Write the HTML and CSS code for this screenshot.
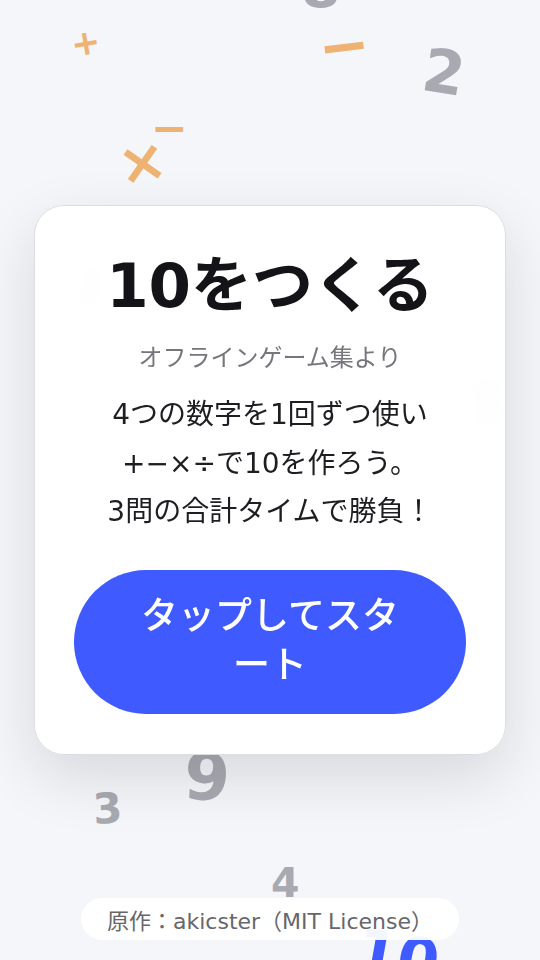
FILE: index.html
```html
<!DOCTYPE html>
<html lang="ja">
<head>
<meta charset="utf-8">
<title>10をつくる</title>
<link rel="stylesheet" href="styles.css">
</head>
<body>
<div class="bg" aria-hidden="true">
  <span class="f num f-top8">8</span>
  <span class="f op f-plus">+</span>
  <span class="f op f-minus1">−</span>
  <span class="f num f-two">2</span>
  <span class="f op f-minus2">−</span>
  <span class="f op f-times">×</span>
  <span class="f num f-hid1">2</span>
  <span class="f num f-hid2">5</span>
  <span class="f op f-hid3">÷</span>
  <span class="f num f-nine">9</span>
  <span class="f num f-three">3</span>
  <span class="f num f-four">4</span>
  <span class="f blue f-ten">10</span>
</div>

<main class="page">
  <section class="card">
    <h1 class="title">10をつくる</h1>
    <p class="subtitle">オフラインゲーム集より</p>
    <p class="desc">4つの数字を1回ずつ使い<br>+−×÷で10を作ろう。<br>3問の合計タイムで勝負！</p>
    <button class="start" type="button">タップしてスタート</button>
  </section>
</main>

<footer class="credit">原作：akicster（MIT License）</footer>
</body>
</html>
```

FILE: styles.css
```css
* { box-sizing: border-box; }

html, body {
  margin: 0;
  height: 100%;
}

body {
  background: #f4f6f9;
  font-family: "DejaVu Sans", "Noto Sans CJK JP", sans-serif;
  color: #1a1a1e;
  overflow: hidden;
  position: relative;
}

/* floating decorative symbols */
.bg {
  position: absolute;
  inset: 0;
  pointer-events: none;
}

.f {
  position: absolute;
  line-height: 1;
  font-weight: 700;
  white-space: nowrap;
}

.num { color: #a8aab1; }
.op { color: #eeb272; }
.blue { color: #3f5bff; }

.f-top8   { left: 301px; top: -40px; font-size: 57px; }
.f-plus   { left: 71px;  top: 26px;  font-size: 35px; transform: rotate(-10deg); }
.f-minus1 { left: 318px; top: 15px;  font-size: 62px; transform: rotate(-7deg); }
.f-two    { left: 423px; top: 42px;  font-size: 60px; transform: rotate(9deg); }
.f-minus2 { left: 151px; top: 106px; font-size: 44px; }
.f-times  { left: 118px; top: 133px; font-size: 58px; transform: rotate(-10deg); }
.f-hid1   { left: 72px;  top: 262px; font-size: 50px; }
.f-hid2   { left: 466px; top: 372px; font-size: 60px; transform: rotate(8deg); }
.f-hid3   { left: 372px; top: 536px; font-size: 30px; }
.f-nine   { left: 184px; top: 745px; font-size: 66px; transform: rotate(4deg); }
.f-three  { left: 93px;  top: 788px; font-size: 42px; transform: rotate(-4deg); }
.f-four   { left: 271px; top: 863px; font-size: 41px; }
.f-ten    { left: 356px; top: 926px; font-size: 60px; transform: rotate(10deg); }

/* main card */
.page {
  position: relative;
  height: 100%;
  display: grid;
  place-items: center;
}

.card {
  width: 472px;
  background: rgba(255, 255, 255, 0.975);
  backdrop-filter: blur(8px);
  border: 1px solid #dcdde0;
  border-radius: 30px;
  box-shadow: 0 22px 60px rgba(20, 24, 40, 0.13);
  padding: 44px 39px 40px;
  text-align: center;
}

.title {
  margin: 0;
  font-size: 61px;
  line-height: 72px;
  font-weight: 700;
  color: #141418;
}

.subtitle {
  margin: 18px 0 0;
  font-size: 24px;
  line-height: 36px;
  color: #76767c;
}

.desc {
  margin: 15px 0 0;
  font-size: 28px;
  line-height: 48.5px;
  color: #1e1e22;
}

.start {
  display: block;
  width: 100%;
  margin-top: 33px;
  padding: 23.5px 52px;
  border: 0;
  border-radius: 72px;
  background: #3f5bff;
  color: #ffffff;
  font-family: inherit;
  font-size: 37px;
  line-height: 48.5px;
  font-weight: 500;
}

/* credit */
.credit {
  position: absolute;
  left: 50%;
  bottom: 20px;
  transform: translateX(-50%);
  height: 42px;
  padding: 0 26px;
  display: flex;
  align-items: center;
  background: rgba(255, 255, 255, 0.94);
  border-radius: 21px;
  font-size: 22px;
  color: #66666b;
  white-space: nowrap;
}
```
